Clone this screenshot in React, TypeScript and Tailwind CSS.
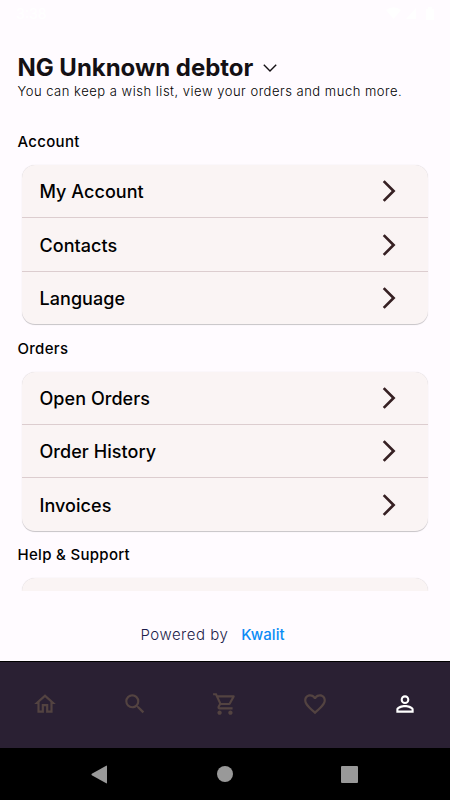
import {
  MdArrowForwardIos,
  MdFavoriteBorder,
  MdOutlineHome,
  MdOutlineShoppingCart,
  MdPersonOutline,
  MdSearch,
} from "react-icons/md";

const sections = [
  { title: "Account", items: ["My Account", "Contacts", "Language"] },
  { title: "Orders", items: ["Open Orders", "Order History", "Invoices"] },
  { title: "Help & Support", items: [] },
];

const tabs = [
  { label: "Home", icon: MdOutlineHome },
  { label: "Search", icon: MdSearch },
  { label: "Cart", icon: MdOutlineShoppingCart },
  { label: "Favorites", icon: MdFavoriteBorder },
  { label: "Profile", icon: MdPersonOutline, active: true },
];

function StatusBar() {
  return (
    <div className="flex h-[27px] items-center justify-between pl-4 pr-[15px] text-white">
      <span className="text-[14px] font-medium leading-none">3:38</span>
      <svg width="49" height="14" viewBox="0 0 49 14" fill="currentColor">
        <path d="M0 3Q7.500-2.500 15 3L7.500 12z" />
        <path d="M30 1V12H20z" />
        <path d="M40 2h2V0h4v2h2v11h-8z" />
      </svg>
    </div>
  );
}

function Section({ title, items }: { title: string; items: string[] }) {
  return (
    <section className="h-[206.500px] shrink-0">
      <h2 className="pl-[17.500px] text-[15px] font-medium leading-5 tracking-[0.300px]">{title}</h2>
      <div className="ml-[21.500px] mr-[22px] mt-[13.200px] min-h-[53px] overflow-hidden rounded-[13px] bg-[#faf4f4] shadow-[0_0.800px_0.800px_rgba(0,0,0,0.220)]">
        {items.map((item, i) => (
          <button
            key={item}
            className={`flex w-full items-center justify-between pl-[18px] pr-[26px] text-left ${
              i < items.length - 1 ? "h-[53.300px] border-b border-[#dccdcf]" : "h-[52.600px]"
            }`}
          >
            <span className="pt-px text-[18px] font-medium tracking-[0.050px]">{item}</span>
            <MdArrowForwardIos size={26} className="text-[#362023]" />
          </button>
        ))}
      </div>
    </section>
  );
}

export default function App() {
  return (
    <div className="flex h-[800px] w-[450px] flex-col overflow-hidden bg-[#fffbff] font-['Inter',sans-serif] text-black">
      <StatusBar />

      {/* Header */}
      <header className="h-[105px] pl-[17.500px] pt-[25px]">
        <div className="flex items-center">
          <h1 className="text-[24px] font-bold leading-8 tracking-[-0.040px] text-[#141014]">NG Unknown debtor</h1>
          <svg className="ml-[10px]" width="14" height="8" viewBox="0 0 14 8" fill="none" stroke="#141014" strokeWidth="1.400">
            <path d="M.8.8 7 7 13.200.8" />
          </svg>
        </div>
        <p className="-mt-px text-[13px] font-light leading-4 tracking-[0.510px] text-black">
          You can keep a wish list, view your orders and much more.
        </p>
      </header>

      {/* Scrollable menu */}
      <main className="flex h-[459px] shrink-0 flex-col overflow-hidden">
        {sections.map((section) => (
          <Section key={section.title} {...section} />
        ))}
      </main>

      <div className="flex h-[70px] shrink-0 items-center gap-[13px] pl-[140.500px] pt-[18px] text-[15px]">
        <span className="font-light tracking-[0.500px] text-[#1d1d4a]">Powered by</span>
        <span className="font-medium tracking-[0.080px] text-[#0b8cf5]">Kwalit</span>
      </div>

      {/* Tab bar */}
      <nav className="flex h-[87px] shrink-0 border-t border-black bg-[#2a2033] pb-[2px]">
        {tabs.map(({ label, icon: Icon, active }) => (
          <button
            key={label}
            aria-label={label}
            className={`flex flex-1 items-center justify-center ${active ? "text-white" : "text-[#534341]"}`}
          >
            <Icon size={26} />
          </button>
        ))}
      </nav>

      {/* System navigation */}
      <div className="flex h-[52px] shrink-0 items-center justify-between bg-black pl-[91px] pr-[92px]">
        <svg width="17" height="19" viewBox="0 0 17 19" fill="#999">
          <path d="M.8 8.800 15.200.7Q16 .3 16 1.200V17.800Q16 18.700 15.200 18.300L.8 10.200Q0 9.500.8 8.800z" />
        </svg>
        <div className="size-4 rounded-full bg-[#999]" />
        <div className="size-[17px] rounded-[1px] bg-[#999]" />
      </div>
    </div>
  );
}
